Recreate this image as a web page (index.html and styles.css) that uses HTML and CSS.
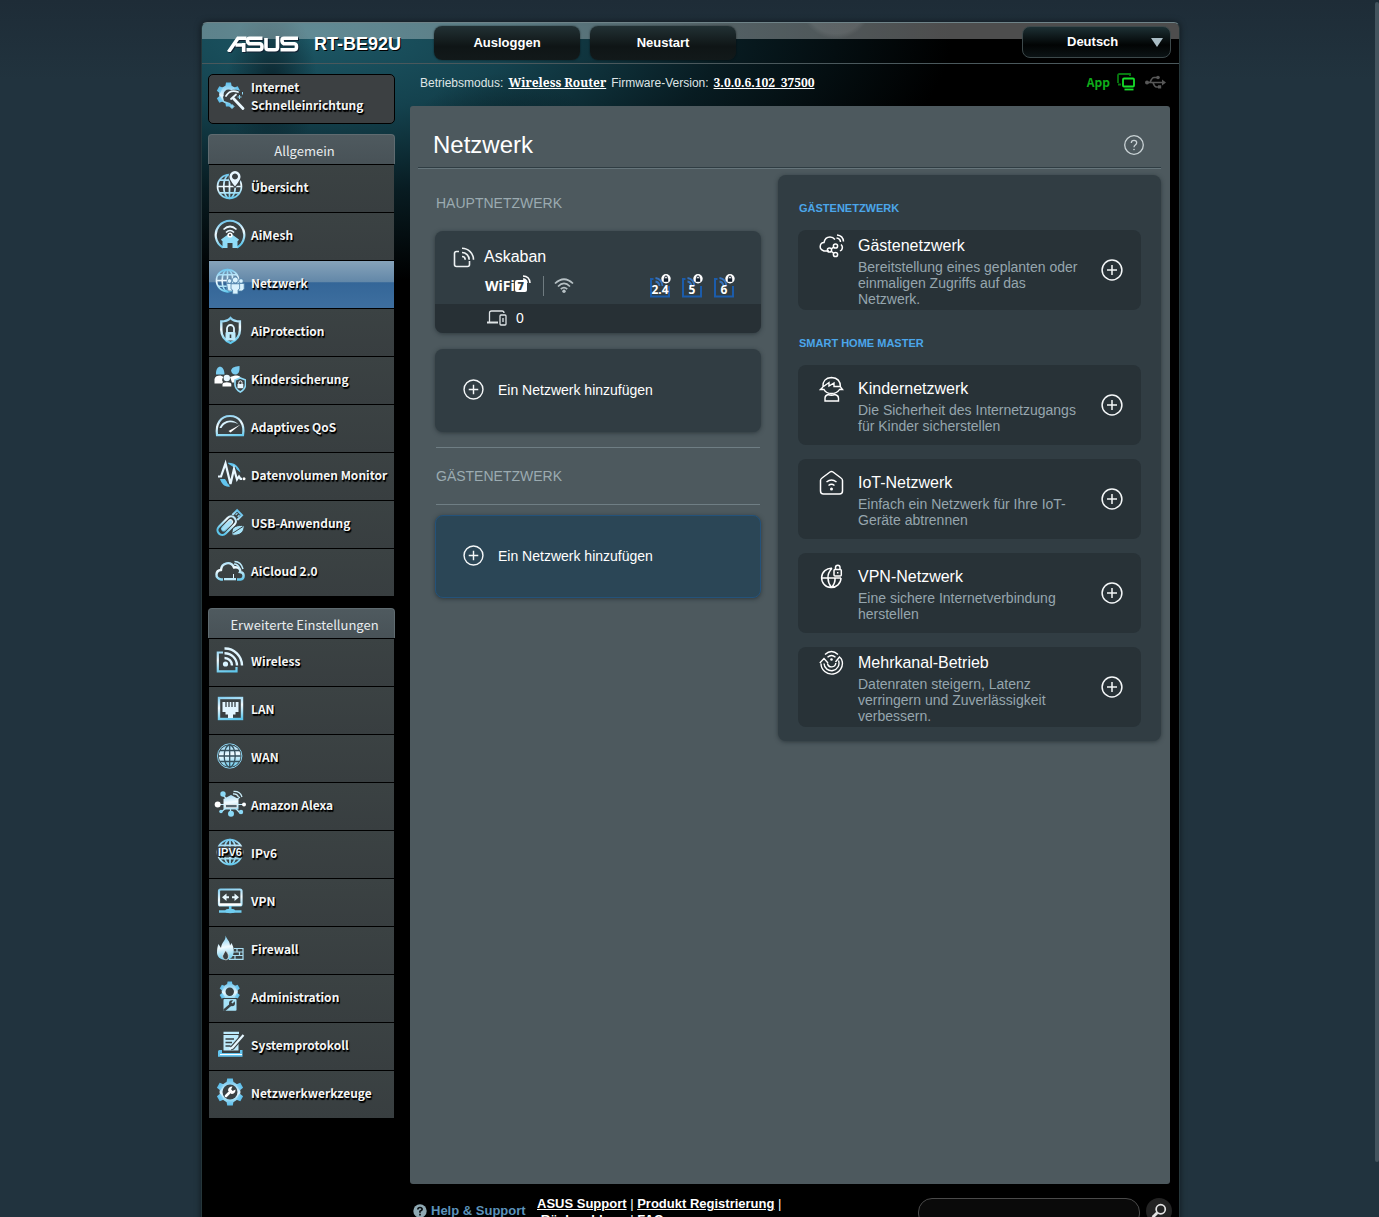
FILE: index.html
```html
<!DOCTYPE html>
<html lang="de">
<head>
<meta charset="utf-8">
<title>ASUS Wireless Router RT-BE92U - Netzwerk</title>
<link rel="stylesheet" href="styles.css">
</head>
<body>
<svg class="sprite" width="0" height="0" aria-hidden="true">
  <defs>
    <linearGradient id="ice" gradientUnits="userSpaceOnUse" x1="0" y1="2" x2="4" y2="29">
      <stop offset="0" stop-color="#5fc0ec"/><stop offset=".5" stop-color="#f2fbff"/><stop offset="1" stop-color="#5cc6ec"/>
    </linearGradient>
    <symbol id="tooth-gear" viewBox="-14 -14 28 28">
      <circle r="8" fill="none" stroke="url(#gearfill)" stroke-width="5"/>
      <g fill="url(#gearfill)">
        <path id="tooth" d="M-3.6-9 -2.8-13.5H2.8L3.6-9z"/>
        <use href="#tooth" transform="rotate(60)"/><use href="#tooth" transform="rotate(120)"/><use href="#tooth" transform="rotate(180)"/><use href="#tooth" transform="rotate(240)"/><use href="#tooth" transform="rotate(300)"/>
      </g>
    </symbol>
    <linearGradient id="gearfill" gradientUnits="userSpaceOnUse" x1="0" y1="-13" x2="0" y2="13">
      <stop offset="0" stop-color="#5fc0ec"/><stop offset=".55" stop-color="#e6f7ff"/><stop offset="1" stop-color="#5cc6ec"/>
    </linearGradient>
    <symbol id="globe" viewBox="0 0 28 28">
      <g fill="none" stroke="url(#ice)" stroke-width="1.8"><circle cx="14" cy="14" r="12.4"/><ellipse cx="14" cy="14" rx="6" ry="12.4"/><path d="M14 1.600V26.400M1.600 14H26.400M3.500 7.500H24.500M3.500 20.500H24.500"/></g>
    </symbol>
    <symbol id="i-quick" viewBox="0 0 32 32">
      <svg x="2" y="2" width="25" height="25" viewBox="-14 -14 28 28"><use href="#tooth-gear" x="-14" y="-14" width="28" height="28"/></svg>
      <path d="M9 17C13 10 20 8 28 11.500V31H24L16 23 10 21z" fill="#3c4042"/>
      <g fill="none" stroke="#eaf8ff" stroke-linecap="round"><path d="M19.500 18.500 29 28.500" stroke-width="2.800"/><path d="M12 16C15 11 19 10 24 12" stroke-width="1.800"/><path d="M17 19 22 14.500" stroke-width="1.800"/></g>
      <path d="M25.500 15v4M23.500 17h4M28.500 12v2.500M18 24.500l2 2-2 2-2-2z" stroke="#8fd8f5" fill="#8fd8f5"/>
    </symbol>
    <symbol id="i-overview" viewBox="0 0 32 32">
      <use href="#globe" x="2" y="2" width="27" height="27"/>
      <path d="M21 17.500C17 12 14.500 9.500 14.500 5.500a6.500 6.500 0 0 1 13 0C27.500 9.500 25 12 21 17.500z" fill="#3a4144"/>
      <path fill-rule="evenodd" d="M21 15.500C17 10.500 15.500 8.300 15.500 5.600a5.500 5.500 0 0 1 11 0C26.500 8.300 25 10.500 21 15.500zM21 2.500a3 3 0 1 0 .01 0z" fill="#e8f7ff"/>
    </symbol>
    <symbol id="i-aimesh" viewBox="0 0 32 32">
      <path d="M9 28.500A14.300 14.300 0 1 1 23 28.500" fill="none" stroke="url(#ice)" stroke-width="2.200"/>
      <path fill-rule="evenodd" d="M16 14 25 20.500 24 22H23.500V29H18.500V24H13.500V29H8.500V22H8L7 20.500z" fill="#8fdcf7"/>
      <circle cx="16" cy="16" r="2.600" fill="#fff"/><circle cx="16" cy="16" r="1.100" fill="#3a4144"/>
      <path d="M9.500 10.500Q16 4.500 22.500 10.500M12 13.500Q16 9.500 20 13.500" fill="none" stroke="#e8f7ff" stroke-width="1.700"/>
    </symbol>
    <symbol id="i-network" viewBox="0 0 32 32">
      <use href="#globe" x="1" y="1" width="25" height="25"/>
      <g fill="#d9f2fd" stroke="#4d80a8" stroke-width=".8"><circle cx="15.500" cy="14" r="2.300"/><circle cx="27" cy="14" r="2.300"/><path d="M12.500 16.500h6V24h-4.500zM24 16.500h6.200V22L28 24h-4z"/><circle cx="21.300" cy="13" r="3"/><path d="M17 16.800h8.600V22l-1.600 1v4h-5.400v-4L17 22z"/></g>
    </symbol>
    <symbol id="i-protect" viewBox="0 0 32 32">
      <path d="M16.500 3C14 5.500 10.500 6.500 7.300 6.500V15C7.300 21 11 25.500 16.500 28 22 25.500 25.900 21 25.900 15V6.500C22.500 6.500 19 5.500 16.500 3z" fill="none" stroke="url(#ice)" stroke-width="2.400"/>
      <path d="M13 17v-3.500a3.500 3.500 0 0 1 7 0V17" fill="none" stroke="#dff5ff" stroke-width="1.800"/><rect x="11.500" y="17" width="10" height="8.500" rx="1" fill="#bdeafb"/><path d="M16.500 19.500v3.500" stroke="#3a4144" stroke-width="1.600"/>
    </symbol>
    <symbol id="i-family" viewBox="0 0 32 32">
      <path d="M2 11.500C1.500 1 10.500 1 10.500 11.500zM17 7.500C18.500 3.500 21 4 25.500 3 26 9.500 24 11.500 21.300 11.500 19 11.500 17.500 10 17 7.500z" fill="#7accf0"/>
      <path d="M.5 20.500V16C1 13.500 3 12.500 6.500 12.500L9.500 14C7.500 16 8 18 9 19L8 20.500zM16 14 21 12.500C24.500 12.500 26 13 26.500 14.500L20.500 17.500V19.500H18z" fill="#fff"/>
      <circle cx="12.800" cy="15" r="3.200" fill="#e6f7ff"/><path d="M8.500 23.500V21Q9 19.200 12.800 19.200 17 19.200 17.300 21V23.500z" fill="#fff"/>
      <path d="M26.300 15 31.500 17V22Q31 26.500 26.300 29 21.500 26.500 21 22V17z" fill="#3a4144" stroke="#8fd9f5" stroke-width="1.700"/><path d="M24.800 21v-1.500a1.500 1.500 0 0 1 3.200 0V21" fill="none" stroke="#fff"/><path d="M23.500 21h5.800v4.200h-5.800z" fill="#e6f7ff"/>
    </symbol>
    <symbol id="i-qos" viewBox="0 0 32 32">
      <path d="M3 24.200C1.500 13 6.500 5 16 5S31 13 29 24.200z" fill="none" stroke="url(#ice)" stroke-width="2.200"/>
      <path d="M5.500 17C8 9 19 6.500 24.500 13.500 19 9.500 10.500 10.500 7.500 17z" fill="#d8f3fe"/><path d="M26.500 13.500 16.500 21.500 14.500 20z" fill="#fff"/>
    </symbol>
    <symbol id="i-traffic" viewBox="0 0 32 32">
      <path d="M13 4C20 3 25 7.500 26.500 13.500L21 9zM6 20 11 20 16 27.500C11 28.500 7.500 25 6 20z" fill="#62c4ee"/>
      <path d="M4 17H7L11.500 4 16 24 19.500 9 22.500 20 24.500 17 26 19.500H27.500" fill="none" stroke="#3a4144" stroke-width="5"/>
      <path d="M4 17.500H7L11.500 4.500 16.500 25 20 10 23 20.500 25 17.500 26.500 19.800H28" fill="none" stroke="#e8f7ff" stroke-width="2.200"/><circle cx="30" cy="19.800" r="1.500" fill="#fff"/>
    </symbol>
    <symbol id="i-usb" viewBox="0 0 32 32">
      <g transform="rotate(45 15 16)" fill="none" stroke="url(#ice)"><rect x="10.500" y="8.500" width="9.500" height="22" rx="4.700" stroke-width="2.200"/><rect x="13.200" y="12" width="4.200" height="14" rx="2.100" fill="#a5e0f7"/><path d="M11.700 8V1.200h7V8" stroke-width="2"/><path d="M14 3v2.500M16.800 3v2.500" stroke-width="1.300"/></g>
      <path d="M18 25C18 19 24 18 30 18.500 31 25 25 29.500 18 28zM19 26 29 19.500" fill="#a7e3f8" stroke="#3a4144"/>
    </symbol>
    <symbol id="i-cloud" viewBox="0 0 32 32">
      <path d="M9 24.500H7C.5 23 1.500 15.500 7 15 7.500 7.500 17 5.500 20 12.500 25 11.500 27 15 26 17 31 17.500 30.500 24 26.500 24.500H23" fill="none" stroke="url(#ice)" stroke-width="2.400"/>
      <path d="M10 23h12v2.300H10z" fill="#bfeafb"/><path d="M19.500 23v-4" stroke="#dff5ff"/><path d="M20 9Q24 9 26 14M20.500 6.500Q27 6.500 29 14" fill="none" stroke="#bfeafb" stroke-width="1.500"/>
    </symbol>
    <symbol id="i-wireless" viewBox="0 0 32 32">
      <path d="M9 7.500H3.800V26.300H22.500V22" fill="none" stroke="url(#ice)" stroke-width="2.200"/><circle cx="11.500" cy="19" r="2.600" fill="#d9f4ff"/>
      <path d="M10.500 13A7.500 7.500 0 0 1 18 20.500M10.500 8.200A12.300 12.300 0 0 1 23 20.500M10.500 3.500A17 17 0 0 1 28 20.500" fill="none" stroke="#dff5ff" stroke-width="2.400"/>
    </symbol>
    <symbol id="i-lan" viewBox="0 0 32 32">
      <rect x="5" y="5" width="23" height="21" fill="none" stroke="url(#ice)" stroke-width="2.400"/>
      <path d="M8.500 9H24.500V19H21.500V21.500H19V25H14V21.500H11.500V19H8.500z" fill="#e3f6ff"/><path d="M12 8.500v5.500M15 8.500v5.500M18 8.500v5.500M21 8.500v5.500" stroke="#3a4144" stroke-width="1.300"/>
    </symbol>
    <symbol id="i-wan" viewBox="0 0 32 32">
      <circle cx="15.700" cy="15" r="10.800" fill="url(#ice)"/><circle cx="15.700" cy="15" r="12.200" fill="none" stroke="#8bd5f4" stroke-width="1"/>
      <g fill="none" stroke="#36505c" stroke-width="1.300"><ellipse cx="15.700" cy="15" rx="5.500" ry="11"/><path d="M15.700 4V26M4.700 15H26.700M6 9.500H25.500M6 20.500H25.500"/></g>
    </symbol>
    <symbol id="i-alexa" viewBox="0 0 32 32">
      <path d="M3 15.500H30M8 5 26 24M16.500 25V8M26 8 7 23" stroke="#bfe9fa" stroke-width="1.200"/>
      <path d="M9.500 10 17 6 24.500 10V20.500H9.500z" fill="url(#ice)"/><path d="M11.500 15.500h11.500v3.200H11.500z" fill="#55656d" stroke="#fff" stroke-width=".7"/>
      <g fill="#8bd9f6"><circle cx="9" cy="5" r="2.700"/><circle cx="17" cy="24.800" r="3"/><circle cx="7" cy="22.500" r="1.800"/><circle cx="27" cy="23" r="2.200"/></g><circle cx="3.700" cy="15.500" r="3" fill="#fff"/><circle cx="30" cy="15.500" r="2" fill="#fff"/>
      <path d="M19 5Q23 4.500 24.500 8M19.500 2.500Q26 2 28 8" fill="none" stroke="#cdeffc" stroke-width="1.300"/>
    </symbol>
    <symbol id="i-ipv6" viewBox="0 0 32 32">
      <use href="#globe" x="2" y="1" width="28" height="28"/><rect x="3" y="9.500" width="26" height="10.500" fill="#3a4144"/>
      <text x="16" y="19" text-anchor="middle" class="ipv6-text">IPV6</text>
    </symbol>
    <symbol id="i-vpn" viewBox="0 0 32 32">
      <rect x="5" y="4.500" width="22.500" height="16" rx="1.500" fill="none" stroke="url(#ice)" stroke-width="2.200"/><path d="M5 19.500H27.500" stroke="#fff" stroke-width="2.500"/>
      <path d="M8 12.300 12.500 8.500V11.300H15V13.300H12.500V16zM25 12.300 20.500 8.500V11.300H18V13.300H20.500V16z" fill="#e8f8ff"/><path d="M16.200 21V25M5 26.500H27.500" stroke="#70cdf0" stroke-width="2.600"/><ellipse cx="16.200" cy="26" rx="5" ry="2.200" fill="#70cdf0"/>
    </symbol>
    <symbol id="i-firewall" viewBox="0 0 32 32">
      <path d="M11.500 2.500C13 7 16 8 16 12.500L17.500 10C20 15 20 17 19.500 20 19 24 16.500 26.800 11.500 26.800 6 26.800 3 23.500 3 19.500 3 16 3.500 13 4.500 11L7 15C7.500 9 12 8 11.500 2.500z" fill="url(#ice)"/>
      <path d="M12 27Q8.500 26.500 8.500 23 10 20 11.500 17.500 15 21 14.500 24 14 26.500 12 27z" fill="#3a4144" stroke="#fff" stroke-width=".6"/>
      <path d="M20 15.500H29V26.300H15M18 19H29M18 22.500H29M23 15.500V19M25.500 19V22.500M21 22.500V26" fill="none" stroke="#a9ddf2" stroke-width="1.200"/>
    </symbol>
    <symbol id="i-admin" viewBox="0 0 32 32">
      <svg x="5" y="0" width="21.500" height="21.500" viewBox="-14 -14 28 28"><use href="#tooth-gear" x="-14" y="-14" width="28" height="28"/></svg>
      <rect x="8.500" y="17" width="15" height="13" fill="#3a4144"/><rect x="9.500" y="18" width="13" height="11.800" rx="1" fill="#a6e2f8"/><path d="M10 29.500 17 23.500" stroke="#3a4144" stroke-width="2.400"/><circle cx="18" cy="22.300" r="3" fill="#3a4144"/><path d="M18 22 21 18.500" stroke="#a6e2f8" stroke-width="1.800"/>
    </symbol>
    <symbol id="i-syslog" viewBox="0 0 32 32">
      <path d="M9.500 2.800H25V5H9.500zM9.500 6H24.500V21.500H9.500z" fill="#bdeafb"/><path d="M4 22.500Q4 21 5.500 21H8V24H26V21H28.500V27.800H4z" fill="#62c4ee"/><path d="M6 25.500H28" stroke="#fff"/>
      <path d="M11.500 10H20M11.500 13.500H18M11.500 17H16" stroke="#3a4144" stroke-width="1.500"/><path d="M29.500 6 18.500 18.500 16.500 19" stroke="#3a4144" stroke-width="4.500"/><path d="M29.500 6 18.500 18.500 15.500 20" fill="none" stroke="#e6f7ff" stroke-width="2.200"/>
    </symbol>
    <symbol id="i-tools" viewBox="0 0 32 32">
      <svg x="2" y="1" width="28" height="28" viewBox="-14 -14 28 28"><use href="#tooth-gear" x="-14" y="-14" width="28" height="28"/></svg>
      <circle cx="16" cy="15" r="7.500" fill="#3a4144"/>
      <path d="M12 19 17 14" stroke="#fff" stroke-width="2.600" stroke-linecap="round"/><path d="M14 13.500A4 4 0 0 1 18.500 9.500L17 12.500 18.500 14 21.500 12.500A4 4 0 0 1 17.500 17z" fill="#fff"/>
    </symbol>
    <symbol id="plus" viewBox="0 0 22 22"><circle cx="11" cy="11" r="9.900" fill="none" stroke="#f4f7f8" stroke-width="1.500"/><path d="M11 6v10M6 11h10" stroke="#f4f7f8" stroke-width="1.500"/></symbol>
    <symbol id="band" viewBox="0 0 22 24">
      <path d="M4.500 5H2V22.500H20V12" fill="none" stroke="#1b5cab" stroke-width="2"/><path d="M6.500 4Q13 5 13.500 12M6.500 7.500Q10 8 10.500 12" fill="none" stroke="#3571bb" stroke-width="1.800"/>
      <circle cx="17" cy="4.800" r="4.700" fill="#fff"/><rect x="14.800" y="4.300" width="4.400" height="3.500" fill="#111d2b"/><path d="M15.700 4.500V3.300a1.300 1.300 0 0 1 2.600 0V4.500" fill="none" stroke="#111d2b"/>
    </symbol>
  </defs>
</svg>

<div class="page">
  <header class="topbar">
    <div class="brand">
      <svg class="logo" viewBox="0 0 72 16" role="img" aria-label="ASUS"><g fill="none" stroke="#fff" stroke-width="3.600"><path d="M2 16 11.500 2.200H20M17.200 7V16M9 9H17"/><path d="M36 2.200H23Q21 2.200 21 4.500T23 7.800H33.500Q35.500 8 35.500 10.800T33.500 13.800H20"/><path d="M39.500 2V11.500Q39.500 13.800 42 13.800H48.500Q51 13.800 51 11.500V0"/><path d="M71.500 2.200H57.500Q55.500 2.200 55.500 4.500T57.500 7.800H68Q70 8 70 10.800T68 13.800H54"/></g></svg>
      <strong class="model">RT-BE92U</strong>
    </div>
    <button class="top-btn" type="button">Ausloggen</button>
    <button class="top-btn" type="button">Neustart</button>
    <div class="lang">
      <select aria-label="Sprache"><option>Deutsch</option></select>
      <svg viewBox="0 0 12 9" aria-hidden="true"><path d="M0 0H12L6 9z" fill="#a9bcc4"/></svg>
    </div>
  </header>

  <div class="body-grid">
    <nav class="sidebar">
      <a class="quick" href="#"><svg><use href="#i-quick"/></svg><span>Internet<br>Schnelleinrichtung</span></a>
      <section class="menu">
        <h2>Allgemein</h2>
        <a href="#"><svg><use href="#i-overview"/></svg>Übersicht</a>
        <a href="#"><svg><use href="#i-aimesh"/></svg>AiMesh</a>
        <a href="#" class="active"><svg><use href="#i-network"/></svg>Netzwerk</a>
        <a href="#"><svg><use href="#i-protect"/></svg>AiProtection</a>
        <a href="#"><svg><use href="#i-family"/></svg>Kindersicherung</a>
        <a href="#"><svg><use href="#i-qos"/></svg>Adaptives QoS</a>
        <a href="#"><svg><use href="#i-traffic"/></svg>Datenvolumen Monitor</a>
        <a href="#"><svg><use href="#i-usb"/></svg>USB-Anwendung</a>
        <a href="#"><svg><use href="#i-cloud"/></svg>AiCloud 2.0</a>
      </section>
      <section class="menu">
        <h2>Erweiterte Einstellungen</h2>
        <a href="#"><svg><use href="#i-wireless"/></svg>Wireless</a>
        <a href="#"><svg><use href="#i-lan"/></svg>LAN</a>
        <a href="#"><svg><use href="#i-wan"/></svg>WAN</a>
        <a href="#"><svg><use href="#i-alexa"/></svg>Amazon Alexa</a>
        <a href="#"><svg><use href="#i-ipv6"/></svg>IPv6</a>
        <a href="#"><svg><use href="#i-vpn"/></svg>VPN</a>
        <a href="#"><svg><use href="#i-firewall"/></svg>Firewall</a>
        <a href="#"><svg><use href="#i-admin"/></svg>Administration</a>
        <a href="#"><svg><use href="#i-syslog"/></svg>Systemprotokoll</a>
        <a href="#"><svg><use href="#i-tools"/></svg>Netzwerkwerkzeuge</a>
      </section>
    </nav>

    <div class="content">
      <div class="info">
        <span>Betriebsmodus:</span><a href="#">Wireless Router</a><span>Firmware-Version:</span><a href="#">3.0.0.6.102_37500</a>
        <div class="status">
          <a class="app" href="#">App</a>
          <svg class="clients" viewBox="0 0 18 18" aria-hidden="true"><path d="M1 10V2.500Q1 1 2.500 1H13V3M1 11.500H4" fill="none" stroke="#087a10" stroke-width="1.800"/><rect x="6" y="5.500" width="11" height="8" rx="1" fill="#000" stroke="#16e02a" stroke-width="1.800"/><path d="M7.500 16.500H16.500" stroke="#16e02a" stroke-width="1.800"/></svg>
          <svg class="usb" viewBox="0 0 21 14" aria-hidden="true"><g fill="none" stroke="#575757" stroke-width="1.700"><path d="M2 7.500H18M5 7.500Q7 2.500 9 2.500H13M8 7.500Q9.500 12 11.500 12H14"/></g><g fill="#575757"><circle cx="2" cy="7.500" r="2"/><circle cx="13" cy="2.500" r="1.800"/><path d="M17 4.500 21 7.500 17 10.500zM13 10.300h3.200v3.200H13z"/></g></svg>
        </div>
      </div>

      <main class="panel">
        <div class="title">
          <h1>Netzwerk</h1>
          <button class="help" type="button" aria-label="Hilfe"><svg viewBox="0 0 20 20"><g fill="none" stroke="#c9d2d5" stroke-width="1.300"><circle cx="10" cy="10" r="9.300"/><path d="M7.300 8Q7.300 5.300 10 5.300T12.700 7.800Q12.700 9 11.300 10 10 11 10 12.300"/></g><circle cx="10" cy="14.500" r=".8" fill="#c9d2d5"/></svg></button>
        </div>
        <div class="columns">
          <div class="networks">
            <h2>HAUPTNETZWERK</h2>
            <a class="net" href="#">
              <span class="net-top">
                <span class="net-name"><svg viewBox="0 0 22 22"><g fill="none" stroke="#eef2f3" stroke-width="1.600"><path d="M6 5.500H3.500Q1.500 5.500 1.500 7.500V18.500Q1.500 20.500 3.500 20.500H14.500Q16.500 20.500 16.500 18.500V15"/><path d="M9 2.200A11.500 11.500 0 0 1 20.500 13.700M9 6.500A7.200 7.200 0 0 1 16.200 13.700M9 10.500A3.200 3.200 0 0 1 12.200 13.700"/></g></svg>Askaban</span>
                <span class="net-bands">
                  <span class="wifi7">WiFi<b>7</b><svg viewBox="0 0 8 8"><path d="M0 1Q6.500 1 7 8M0 4Q3.500 4 4 8" fill="none" stroke="#fff" stroke-width="1.500"/></svg></span>
                  <svg class="wifi" viewBox="0 0 20 15"><g fill="none" stroke="#b7c1c5" stroke-width="1.700"><path d="M1 5.500Q10-3 19 5.500M4 8.500Q10 2.500 16 8.500M6.800 11.200Q10 8 13.200 11.200"/></g><circle cx="10" cy="13.300" r="1.700" fill="#b7c1c5"/></svg>
                  <span class="band"><svg><use href="#band"/></svg><b>2.4</b></span>
                  <span class="band"><svg><use href="#band"/></svg><b>5</b></span>
                  <span class="band"><svg><use href="#band"/></svg><b>6</b></span>
                </span>
              </span>
              <span class="net-clients"><svg viewBox="0 0 20 16"><g fill="none" stroke="#dfe4e6" stroke-width="1.300"><path d="M2.500 12V3Q2.500 1 4.500 1H15Q17 1 17 3"/><rect x="13" y="5" width="6" height="10" rx="1"/><path d="M16 8v4"/></g><path d="M0 12.500H11" stroke="#dfe4e6" stroke-width="2"/></svg>0</span>
            </a>
            <button class="add" type="button"><svg><use href="#plus"/></svg>Ein Netzwerk hinzufügen</button>
            <h2 class="ruled">GÄSTENETZWERK</h2>
            <button class="add selected" type="button"><svg><use href="#plus"/></svg>Ein Netzwerk hinzufügen</button>
          </div>

          <aside class="templates">
            <h3>GÄSTENETZWERK</h3>
            <button class="tpl" type="button">
              <span class="tpl-main">
                <svg viewBox="0 0 26 26"><g fill="none" stroke="#fff" stroke-width="1.500"><path d="M10 18H5Q1 16.500 1.200 13.500 1.500 9.500 5 9.500 6 4 11 4 14 4 16 6.500M22 11.500Q24.500 14 22.500 17L21 18"/><circle cx="10.500" cy="17" r="2.100"/><circle cx="16.500" cy="13" r="2.100"/><circle cx="16.500" cy="21.500" r="2.100"/><path d="M12.300 15.800 14.700 14.200M12.300 18.200 14.700 20.300M18 2Q24 2.500 24.500 8.500M17.500 5Q21.300 5.500 21.500 9"/></g></svg>
                <span class="tpl-text"><span class="tpl-name">Gästenetzwerk</span><span class="tpl-desc">Bereitstellung eines geplanten oder einmaligen Zugriffs auf das Netzwerk.</span></span>
              </span>
              <svg class="tpl-add"><use href="#plus"/></svg>
            </button>
            <h3>SMART HOME MASTER</h3>
            <button class="tpl" type="button">
              <span class="tpl-main">
                <svg viewBox="0 0 26 26"><g fill="none" stroke="#fff" stroke-width="1.400"><path d="M4 11Q3.500 2 12.500 1.500 21.500 2 21.500 11M4 11 1.500 13.500H5Q7 17.500 12.500 17.500T20.500 13.500H23.500L21.500 11M4.500 10.500 10 6.500V10L15 7V10.500H21M6 25V22Q6 19.500 9 18.500 12.500 20 16 18.500 19.500 19.500 19.500 22V25z"/></g></svg>
                <span class="tpl-text"><span class="tpl-name">Kindernetzwerk</span><span class="tpl-desc">Die Sicherheit des Internetzugangs für Kinder sicherstellen</span></span>
              </span>
              <svg class="tpl-add"><use href="#plus"/></svg>
            </button>
            <button class="tpl" type="button">
              <span class="tpl-main">
                <svg viewBox="0 0 26 26"><g fill="none" stroke="#fff" stroke-width="1.500"><path d="M1.500 10.500Q1.500 9 3 8L11 2Q12.500 1 14 2L22 8Q23.500 9 23.500 10.500V21Q23.500 24 20.500 24H4.500Q1.500 24 1.500 21z"/><path d="M7.500 12Q12.500 8 17.500 12M9.500 15.500Q12.500 13 15.500 15.500"/></g><circle cx="12.500" cy="19" r="1.500" fill="#fff"/></svg>
                <span class="tpl-text"><span class="tpl-name">IoT-Netzwerk</span><span class="tpl-desc">Einfach ein Netzwerk für Ihre IoT-Geräte abtrennen</span></span>
              </span>
              <svg class="tpl-add"><use href="#plus"/></svg>
            </button>
            <button class="tpl" type="button">
              <span class="tpl-main">
                <svg viewBox="0 0 26 26"><g fill="none" stroke="#fff" stroke-width="1.500"><path d="M13 4.200A9.700 9.700 0 1 0 22 14M13 4.200Q8.500 9 9 14 9 19 12.500 23.500M12.500 23.500Q16.500 19 16 14M3 14H22"/><rect x="15" y="5.500" width="7.300" height="6.500" rx="1"/><path d="M16.500 5.500V3.500A2.200 2.200 0 0 1 21 3.500V5.500M18.700 8v1.500"/></g></svg>
                <span class="tpl-text"><span class="tpl-name">VPN-Netzwerk</span><span class="tpl-desc">Eine sichere Internetverbindung herstellen</span></span>
              </span>
              <svg class="tpl-add"><use href="#plus"/></svg>
            </button>
            <button class="tpl" type="button">
              <span class="tpl-main">
                <svg viewBox="0 0 26 26"><g fill="none" stroke="#fff" stroke-width="1.400"><path d="M.8 13 5 8.500 9 13M2 13.500A10.700 10.700 0 1 0 23 10.500Q22.500 8.500 20.500 7L16.500 12M5 13.500A7.500 7.500 0 1 0 19.500 10.500M8.500 13.500A4.200 4.200 0 0 0 16.800 13M6 4.500Q12.500-1.500 19 4.500M8.500 7.300Q12.500 3.800 16.500 7.300"/></g><circle cx="12.500" cy="9.500" r="1.300" fill="#fff"/></svg>
                <span class="tpl-text"><span class="tpl-name">Mehrkanal-Betrieb</span><span class="tpl-desc">Datenraten steigern, Latenz verringern und Zuverlässigkeit verbessern.</span></span>
              </span>
              <svg class="tpl-add"><use href="#plus"/></svg>
            </button>
          </aside>
        </div>
      </main>

      <footer class="footer">
        <div class="support"><svg viewBox="0 0 14 14" aria-hidden="true"><circle cx="7" cy="7" r="6.700" fill="#8fa9b3"/><path d="M4.800 5.500Q5 3.500 7 3.500T9.200 5.300Q9.200 6.500 7 7.300V8.700M7 9.800V11.500" fill="none" stroke="#0a0f12" stroke-width="1.700"/></svg>Help &amp; Support</div>
        <div class="links"><a href="#">ASUS Support</a> | <a href="#">Produkt Registrierung</a> | &nbsp;<a href="#">Rückmeldung</a> | <a href="#">FAQ</a></div>
        <input class="search" type="text" aria-label="FAQ durchsuchen">
        <button class="search-btn" type="button" aria-label="Suchen"><svg viewBox="0 0 14 14"><circle cx="8.500" cy="5.500" r="4" fill="none" stroke="#e3e3e3" stroke-width="1.500"/><path d="M5.500 8.500 1.500 12.500" stroke="#e3e3e3" stroke-width="2.500"/></svg></button>
      </footer>
    </div>
  </div>
</div>
<div class="scroll-thumb"></div>
</body>
</html>
```

FILE: styles.css
```css
* { box-sizing: border-box; }

html, body { height: 100%; }

body {
  margin: 0;
  padding: 22px 0 0 2px;
  overflow: hidden;
  background: #21323d linear-gradient(#1e2c37, #21333e 80px);
  background-attachment: fixed;
  font-family: "Liberation Sans", Arial, sans-serif;
  font-size: 14px;
  color: #fff;
}

button, input, select { font: inherit; color: inherit; margin: 0; }
button { cursor: pointer; text-align: left; }
a { color: inherit; }
svg { display: block; flex: none; }
h1, h2, h3 { margin: 0; font-weight: 400; }

.sprite { position: absolute; }
.ipv6-text { font: 700 11px "Liberation Sans", Arial, sans-serif; fill: #f2fbff; }

.page {
  max-width: 979px;
  min-height: 100%;
  margin: 0 auto;
  border: 1px solid #25363a;
  border-top-color: #6f8388;
  border-radius: 6px 6px 0 0;
  box-shadow: 0 0 6px rgba(0, 0, 0, .5);
  background:
    radial-gradient(ellipse 45px 80px at 70px 60px, rgba(9, 30, 38, .8), transparent),
    radial-gradient(ellipse 90px 60px at 300px 110px, rgba(3, 16, 20, .4), transparent),
    radial-gradient(ellipse 640px 250px at 110px 10px, #1d5866, #14424e 32%, #081c22 64%, transparent),
    #000;
}

/* Top bar */
.topbar {
  display: flex;
  align-items: flex-start;
  gap: 10px;
  height: 41px;
  padding: 3px 8px 0 24px;
  border-bottom: 1px solid #4a585c;
  background:
    radial-gradient(circle 36px at 634px -20px, rgba(255, 255, 255, .08) 85%, transparent),
    linear-gradient(rgba(255, 255, 255, .3), rgba(255, 255, 255, .3)) top / 100% 16px no-repeat;
  border-radius: 5px 5px 0 0;
}

.brand { display: flex; align-items: center; gap: 15px; width: 198px; height: 36px; }
.logo { width: 73px; height: 16px; filter: drop-shadow(1px 1px 0 #123); }
.model { font-size: 18px; text-shadow: 1px 1px 0 #000; }

.top-btn {
  width: 146px;
  height: 34px;
  padding: 0 8px 2px;
  border: 0;
  border-radius: 8px;
  background: linear-gradient(#223134, #0f1516 60%, #12191a);
  box-shadow: 0 0 2px rgba(0, 0, 0, .6);
  text-align: center;
  font-size: 13px;
  font-weight: 700;
}

.lang { display: grid; align-items: center; width: 149px; margin-left: auto; }
.lang > * { grid-area: 1 / 1; }
.lang select {
  width: 100%;
  height: 32px;
  padding: 0 20px 1px 44px;
  appearance: none;
  border: 1px solid #3d494b;
  border-radius: 8px;
  background: linear-gradient(#1d3034, #020404 60%, #0b1315);
  font-size: 13px;
  font-weight: 700;
}
.lang svg { justify-self: end; width: 12px; height: 9px; margin-right: 8px; pointer-events: none; }

/* Frame */
.body-grid {
  display: grid;
  grid-template-columns: 187px minmax(0, 1fr);
  gap: 15px;
  padding: 0 9px 0 6px;
}

/* Sidebar */
.sidebar {
  display: flex;
  flex-direction: column;
  gap: 10px;
  padding-top: 10px;
  font-family: "Noto Sans CJK SC", "Noto Sans", sans-serif;
}

.quick, .menu a {
  display: flex;
  align-items: center;
  gap: 5px;
  font-size: 12px;
  font-weight: 700;
  line-height: 18px;
  color: #f4f6f6;
  text-decoration: none;
  text-shadow: 1px 1px 0 #000, 1px 2px 1px #000;
}
.quick svg, .menu svg { width: 32px; height: 32px; }

.quick {
  height: 50px;
  padding: 0 5px 6px;
  border: 1px solid #000;
  border-radius: 5px;
  background: #3c4042;
}

.menu { padding: 0 1px; }
.menu + .menu { margin-top: 2px; }

.menu h2 {
  height: 30px;
  margin: 0 -1px;
  padding: 2px 0 0 6px;
  border: 1px solid #5f6b70;
  border-bottom: 0;
  border-radius: 4px 4px 0 0;
  background: linear-gradient(#4f5a5f, #485257);
  font-size: 13px;
  line-height: 28px;
  text-align: center;
  color: #e8ecee;
}

.menu a {
  height: 48px;
  padding: 0 0 3px 5px;
  border-top: 1px solid #000;
  background: linear-gradient(#3b4243, #383e40);
}
.menu a.active { background: linear-gradient(#86a3ba, #6287a8 45%, #346698 46%, #3e6f9f); }

/* Info line */
.info {
  display: flex;
  align-items: center;
  gap: 5px;
  height: 42px;
  padding: 0 4px 5px 10px;
  font-size: 12px;
  color: #dfe5e6;
}
.info > a { font-family: "Noto Serif", "Liberation Serif", serif; font-size: 12px; font-weight: 700; color: #fff; }
.status { display: flex; align-items: center; gap: 7px; margin-left: auto; padding-bottom: 2px; }
.app { font-family: "Noto Sans CJK SC", sans-serif; font-weight: 700; line-height: 18px; color: #0fae1b; text-decoration: none; }
.clients { width: 18px; height: 18px; }
.usb { width: 21px; height: 14px; margin-left: 3px; }

/* Main panel */
.panel {
  min-height: 1078px;
  padding: 0 9px 0 8px;
  border-radius: 3px;
  background: #4d595e;
}

.title {
  display: flex;
  align-items: center;
  justify-content: space-between;
  height: 62px;
  padding: 16px 17px 0 15px;
  border-bottom: 1px solid #2f3d43;
  box-shadow: 0 1px 0 #66757b;
}
.title h1 { font-size: 24px; }
.help { padding: 0; border: 0; background: none; }
.help svg { width: 20px; height: 20px; }

.columns {
  display: grid;
  grid-template-columns: 326px minmax(0, 383px);
  justify-content: space-between;
  align-items: start;
  padding: 7px 0 0 17px;
}

.networks h2 { height: 56px; margin: 0 1px; font-size: 14px; line-height: 56px; color: #9babb1; }
.networks h2.ruled { height: 58px; margin: 15px 1px 10px; border: solid #6f7e84; border-width: 1px 0; }

.net, .add { border-radius: 8px; background: #313d43; box-shadow: 0 1px 4px rgba(25, 35, 40, .6); }

.net { display: block; overflow: hidden; color: #fff; text-decoration: none; }
.net-top { display: block; padding: 15px 26px 1px 18px; }
.net-name { display: flex; align-items: center; gap: 9px; font-size: 16px; }
.net-name svg { width: 22px; height: 22px; }
.net-bands { display: flex; align-items: center; gap: 10px; height: 35px; padding-left: 32px; }
.wifi7 {
  display: flex;
  align-items: center;
  height: 20px;
  padding-right: 16px;
  border-right: 1px solid #6f7b80;
  font: 700 14px/20px "Noto Sans", sans-serif;
}
.wifi7 b { height: 12px; padding: 0 3px; border-radius: 2px; background: #fff; color: #313d43; font-size: 11px; line-height: 12px; }
.wifi7 svg { width: 8px; height: 8px; margin: -14px -4px 0 -4px; }
.wifi { width: 20px; height: 15px; margin-right: auto; }
.band { display: grid; width: 22px; }
.band > * { grid-area: 1 / 1; }
.band svg { width: 22px; height: 24px; }
.band b { padding-top: 8px; text-align: center; font: 700 12px/16px "Noto Sans", sans-serif; }

.net-clients { display: flex; align-items: center; gap: 9px; height: 29px; padding: 0 0 2px 52px; background: #273035; font-size: 14px; }
.net-clients svg { width: 20px; height: 16px; }

.add {
  display: flex;
  align-items: center;
  gap: 14px;
  width: 100%;
  height: 83px;
  padding: 0 27px 2px;
  border: 1px solid transparent;
  color: #fff;
}
.add svg { width: 21px; height: 21px; }
.net + .add { margin-top: 16px; }
.add.selected { border-color: #24527a; background: #2b4656; }

.templates {
  display: grid;
  gap: 14px;
  padding: 0 20px 14px;
  border-radius: 8px;
  background: #313d43;
  box-shadow: 0 1px 4px rgba(25, 35, 40, .6);
}
.templates h3 { padding: 26px 0 0 1px; font-size: 11px; font-weight: 700; line-height: 15px; color: #4ba6ea; }
.tpl + h3 { padding-top: 12px; }

.tpl {
  display: flex;
  align-items: center;
  width: 100%;
  height: 80px;
  padding: 0 18px 0 21px;
  border: 0;
  border-radius: 8px;
  background: #283237;
}
.tpl-main { display: flex; flex: 1; align-items: flex-start; gap: 13px; padding-right: 16px; }
.tpl-main svg { width: 26px; height: 26px; }
.tpl-name { display: block; font-size: 16px; line-height: 26px; }
.tpl-desc { display: block; line-height: 16px; color: #96a6ae; }
.tpl-add { width: 22px; height: 22px; }

/* Footer */
.footer { display: flex; align-items: flex-start; margin-right: -2px; padding: 12px 0 40px 3px; font-size: 13px; }
.support { display: flex; align-items: center; gap: 4px; width: 124px; padding-top: 7px; font-weight: 700; line-height: 16px; color: #5c93bb; }
.support svg { width: 14px; height: 14px; }
.links { flex: 1; max-width: 260px; line-height: 16px; }
.links a { font-weight: 700; }
.search { width: 222px; height: 30px; margin: 2px 6px 0 auto; padding: 0 12px; border: 1px solid #4a4a4a; border-radius: 14px; background: #0a0a0a; }
.search-btn { display: grid; place-items: center; width: 26px; height: 26px; margin-top: 2px; padding: 0; border: 0; border-radius: 50%; background: #232323; }
.search-btn svg { width: 16px; height: 16px; }

.scroll-thumb { position: fixed; top: 2px; right: 0; width: 4px; height: 1160px; border-radius: 2px; background: #44545e; }
```
